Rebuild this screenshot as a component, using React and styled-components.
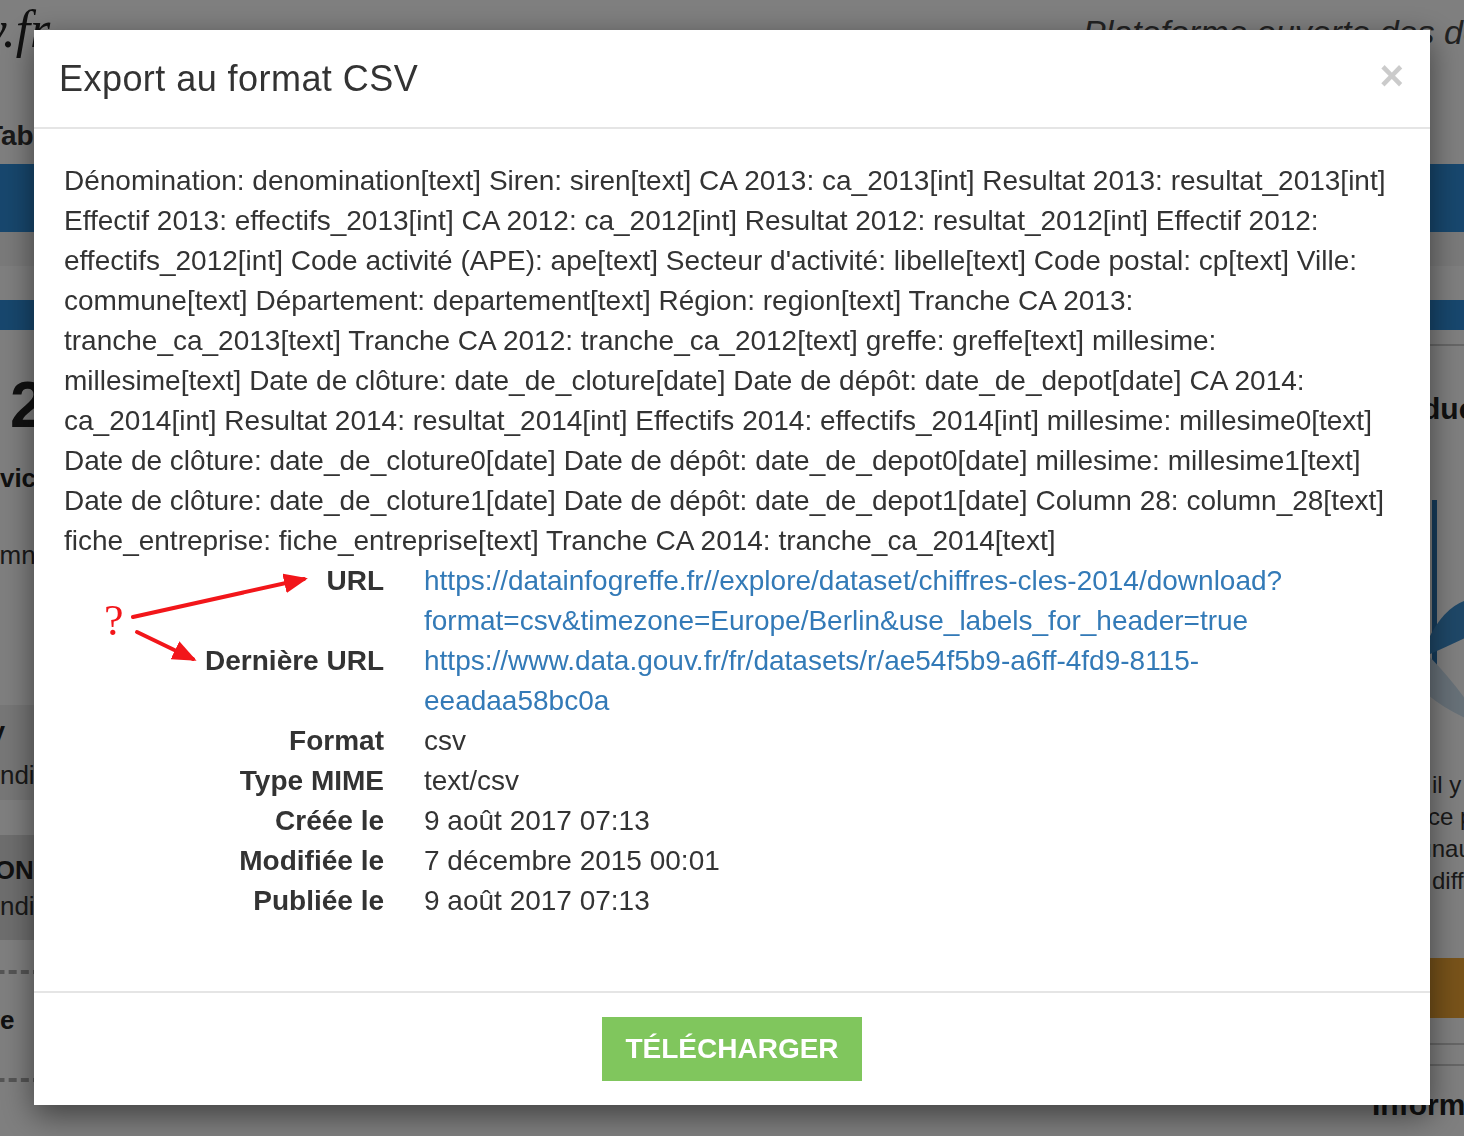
import React from 'react';
import styled, { createGlobalStyle } from 'styled-components';

const colors = {
  text: '#333333',
  link: '#337ab7',
  border: '#e5e5e5',
  green: '#80c65d',
  blue: '#2f8fdc',
  orange: '#f0a634',
  red: '#f2161a',
};

const GlobalStyle = createGlobalStyle`
  html, body {
    margin: 0;
    padding: 0;
    overflow: hidden;
  }
  body {
    font-family: "Liberation Sans", Helvetica, Arial, sans-serif;
    color: ${colors.text};
  }
`;

/* ---------- page behind the modal ---------- */

const Page = styled.div`
  width: 1464px;
  height: 1136px;
  overflow: hidden;
  background: #ffffff;
`;

const SiteHeader = styled.header`
  display: grid;
  grid-template-columns: 1083px 1fr;
  height: 112px;
  overflow: hidden;
`;

const Logo = styled.div`
  font-family: "Liberation Serif", serif;
  font-style: italic;
  font-size: 52px;
  line-height: 60px;
  margin-left: -200px;
  color: #222;
  white-space: nowrap;
`;

const Tagline = styled.div`
  font-style: italic;
  font-size: 34px;
  line-height: 40px;
  margin-top: 12px;
  color: #444;
  white-space: nowrap;
`;

const NavRow = styled.div`
  font-weight: bold;
  font-size: 28px;
  line-height: 48px;
  margin-left: -14px;
  height: 52px;
`;

const Band = styled.div`
  height: ${(p) => p.$h}px;
  background: ${(p) => p.$bg};
`;

const Columns = styled.div`
  display: flex;
  justify-content: space-between;
`;

const LeftCol = styled.div`
  width: 300px;
  margin-left: -40px;
  display: flex;
  flex-direction: column;
`;

const RightCol = styled.div`
  width: 300px;
  margin-right: -208px;
  display: flex;
  flex-direction: column;
  padding-top: 14px;
`;

const BigNumber = styled.div`
  font-size: 64px;
  font-weight: bold;
  line-height: 80px;
  margin-top: 35px;
  padding-left: 50px;
  color: #222;
`;

const SideBold = styled.div`
  font-weight: bold;
  font-size: 26px;
  line-height: 36px;
  white-space: nowrap;
  text-indent: ${(p) => p.$indent || 0}px;
  margin-top: ${(p) => p.$mt || 0}px;
  color: #222;
`;

const SideText = styled.div`
  font-size: 26px;
  line-height: 36px;
  white-space: nowrap;
  text-indent: ${(p) => p.$indent || 0}px;
  margin-top: ${(p) => p.$mt || 0}px;
  color: #333;
`;

const SideBlock = styled.div`
  background: ${(p) => p.$bg};
  padding-top: ${(p) => p.$pt}px;
  margin-top: ${(p) => p.$mt || 0}px;
  height: ${(p) => p.$h}px;
  box-sizing: border-box;
`;

const Dashed = styled.div`
  border-top: 4px dashed #aaa;
  margin-top: ${(p) => p.$mt || 0}px;
`;

const RightTitle = styled.div`
  font-weight: bold;
  font-size: 30px;
  line-height: 40px;
  color: #222;
  white-space: nowrap;
  ${(p) => p.$ruled && `border-top: 2px solid #ccc; padding-top: 43px;`}
  margin-top: ${(p) => p.$mt || 0}px;
`;

const Illustration = styled.div`
  height: 290px;
  margin-top: 21px;
`;

const RightText = styled.div`
  font-size: 24px;
  line-height: 32px;
  color: #333;
  white-space: nowrap;
  text-indent: ${(p) => p.$indent}px;
`;

const TextBlock = styled.div`
  margin-top: 29px;
`;

const OrangeBar = styled.div`
  height: 60px;
  background: ${colors.orange};
  margin-top: 61px;
`;

const ThinRule = styled.div`
  border-top: 2px solid #ccc;
  margin-top: ${(p) => p.$mt}px;
`;

/* ---------- modal ---------- */

const Backdrop = styled.div`
  position: fixed;
  inset: 0;
  background: rgba(0, 0, 0, 0.5);
`;

const Dialog = styled.div`
  width: 1396px;
  margin: 30px 0 0 34px;
  background: #fff;
  box-shadow: 0 10px 30px rgba(0, 0, 0, 0.5);
`;

const ModalHeader = styled.div`
  display: flex;
  align-items: center;
  justify-content: space-between;
  height: 97px;
  padding: 0 26px 0 25px;
  border-bottom: 2px solid ${colors.border};
`;

const Title = styled.h4`
  margin: 0;
  font-size: 36px;
  font-weight: normal;
  letter-spacing: 0.45px;
  color: #333;
`;

const Close = styled.button`
  border: none;
  background: none;
  padding: 0;
  font-family: "Liberation Sans", Arial, sans-serif;
  font-size: 42px;
  font-weight: bold;
  line-height: 1;
  color: #000;
  opacity: 0.2;
  margin-top: -6px;
  cursor: pointer;
`;

const ModalBody = styled.div`
  position: relative;
  padding: 32px 30px 30px;
  font-size: 28px;
  line-height: 40px;
  color: #333;
`;

const Schema = styled.p`
  margin: 0;
`;

const Details = styled.dl`
  display: grid;
  grid-template-columns: 320px 1fr;
  column-gap: 40px;
  margin: 0 0 40px;
`;

const Term = styled.dt`
  font-weight: bold;
  text-align: right;
  white-space: nowrap;
`;

const Value = styled.dd`
  margin: 0;
`;

const Link = styled.a`
  color: ${colors.link};
  text-decoration: none;
`;

const Annotation = styled.svg`
  position: absolute;
  left: 0;
  top: 0;
  overflow: visible;
  pointer-events: none;
`;

const ModalFooter = styled.div`
  display: flex;
  justify-content: center;
  padding: 24px 30px 24px;
  border-top: 2px solid ${colors.border};
`;

const DownloadButton = styled.button`
  width: 260px;
  height: 64px;
  border: none;
  border-radius: 0;
  background: ${colors.green};
  color: #fff;
  font-family: "Liberation Sans", Helvetica, Arial, sans-serif;
  font-size: 28px;
  font-weight: bold;
  text-transform: uppercase;
  cursor: pointer;
`;

const fields = [
  ['Format', 'csv'],
  ['Type MIME', 'text/csv'],
  ['Créée le', '9 août 2017 07:13'],
  ['Modifiée le', '7 décembre 2015 00:01'],
  ['Publiée le', '9 août 2017 07:13'],
];

const schemaText =
  "Dénomination: denomination[text] Siren: siren[text] CA 2013: ca_2013[int] Resultat 2013: resultat_2013[int] " +
  'Effectif 2013: effectifs_2013[int] CA 2012: ca_2012[int] Resultat 2012: resultat_2012[int] Effectif 2012: ' +
  "effectifs_2012[int] Code activité (APE): ape[text] Secteur d'activité: libelle[text] Code postal: cp[text] Ville: " +
  'commune[text] Département: departement[text] Région: region[text] Tranche CA 2013: ' +
  'tranche_ca_2013[text] Tranche CA 2012: tranche_ca_2012[text] greffe: greffe[text] millesime: ' +
  'millesime[text] Date de clôture: date_de_cloture[date] Date de dépôt: date_de_depot[date] CA 2014: ' +
  'ca_2014[int] Resultat 2014: resultat_2014[int] Effectifs 2014: effectifs_2014[int] millesime: millesime0[text] ' +
  'Date de clôture: date_de_cloture0[date] Date de dépôt: date_de_depot0[date] millesime: millesime1[text] ' +
  'Date de clôture: date_de_cloture1[date] Date de dépôt: date_de_depot1[date] Column 28: column_28[text] ' +
  'fiche_entreprise: fiche_entreprise[text] Tranche CA 2014: tranche_ca_2014[text]';

function BackgroundPage() {
  return (
    <Page>
      <SiteHeader>
        <Logo>data.gouv.fr</Logo>
        <Tagline>Plateforme ouverte des données publiques</Tagline>
      </SiteHeader>
      <NavRow>Tableau de bord</NavRow>
      <Band $h={68} $bg={colors.blue} />
      <Band $h={34} $bg="#f4f4f4" />
      <Band $h={34} $bg="#ffffff" />
      <Band $h={30} $bg={colors.blue} />
      <Columns>
        <LeftCol>
          <BigNumber>24</BigNumber>
          <SideBold $mt={15} $indent={-2}>Services</SideBold>
          <SideText $mt={41} $indent={-14}>Columns</SideText>
          <SideBlock $bg="#eeeeee" $h={95} $pt={12} $mt={132}>
            <SideBold $indent={-30}>NOUV</SideBold>
            <SideText $mt={4} $indent={11}>Lundi</SideText>
          </SideBlock>
          <SideBlock $bg="#dddddd" $h={105} $pt={17} $mt={35}>
            <SideBold $indent={-26}>SAISON</SideBold>
            <SideText $indent={11}>Lundi</SideText>
          </SideBlock>
          <Dashed $mt={30} />
          <SideBold $mt={28} $indent={-41}>Archive</SideBold>
          <Dashed $mt={40} />
        </LeftCol>
        <RightCol>
          <RightTitle $ruled>Production</RightTitle>
          <Illustration>
            <svg width="120" height="290" viewBox="0 0 120 290">
              <rect x="60" y="50" width="5" height="170" fill="#2a78b8" />
              <rect x="96" y="60" width="10" height="90" fill="#1e6fb5" />
              <path d="M56 190 Q80 140 120 150 L120 175 Q90 190 56 205 Z" fill="#3d8fcf" />
              <path d="M56 205 Q90 240 110 275 Q76 262 56 245 Z" fill="#cfe2f1" />
            </svg>
          </Illustration>
          <TextBlock>
            <RightText $indent={60}>il y a</RightText>
            <RightText $indent={56}>ce projet</RightText>
            <RightText $indent={-19}>communauté</RightText>
            <RightText $indent={60}>diffusion</RightText>
          </TextBlock>
          <OrangeBar />
          <ThinRule $mt={25} />
          <ThinRule $mt={19} />
          <RightTitle $mt={19}>Informations</RightTitle>
        </RightCol>
      </Columns>
    </Page>
  );
}

export default function App() {
  return (
    <>
      <GlobalStyle />
      <BackgroundPage />
      <Backdrop>
        <Dialog>
          <ModalHeader>
            <Title>Export au format CSV</Title>
            <Close aria-label="Fermer">×</Close>
          </ModalHeader>
          <ModalBody>
            <Schema>{schemaText}</Schema>
            <Details>
              <Term>URL</Term>
              <Value>
                <Link href="#">
                  https://datainfogreffe.fr//explore/dataset/chiffres-cles-2014/download?
                  <br />
                  format=csv&amp;timezone=Europe/Berlin&amp;use_labels_for_header=true
                </Link>
              </Value>
              <Term>Dernière URL</Term>
              <Value>
                <Link href="#">
                  https://www.data.gouv.fr/fr/datasets/r/ae54f5b9-a6ff-4fd9-8115-
                  <br />
                  eeadaa58bc0a
                </Link>
              </Value>
              {fields.map(([label, value]) => (
                <React.Fragment key={label}>
                  <Term>{label}</Term>
                  <Value>{value}</Value>
                </React.Fragment>
              ))}
            </Details>
            <Annotation width="1" height="1">
              <defs>
                <marker id="head" markerWidth="6" markerHeight="5" refX="5" refY="2.5" orient="auto" markerUnits="strokeWidth">
                  <path d="M0 0 L6 2.5 L0 5 Z" fill={colors.red} />
                </marker>
              </defs>
              <text x="70" y="506" fontFamily="Liberation Serif, serif" fontSize="44" fill={colors.red}>?</text>
              <line x1="99" y1="488" x2="270" y2="450" stroke={colors.red} strokeWidth="4" strokeLinecap="round" markerEnd="url(#head)" />
              <line x1="103" y1="503" x2="159" y2="530" stroke={colors.red} strokeWidth="4" strokeLinecap="round" markerEnd="url(#head)" />
            </Annotation>
          </ModalBody>
          <ModalFooter>
            <DownloadButton>Télécharger</DownloadButton>
          </ModalFooter>
        </Dialog>
      </Backdrop>
    </>
  );
}
